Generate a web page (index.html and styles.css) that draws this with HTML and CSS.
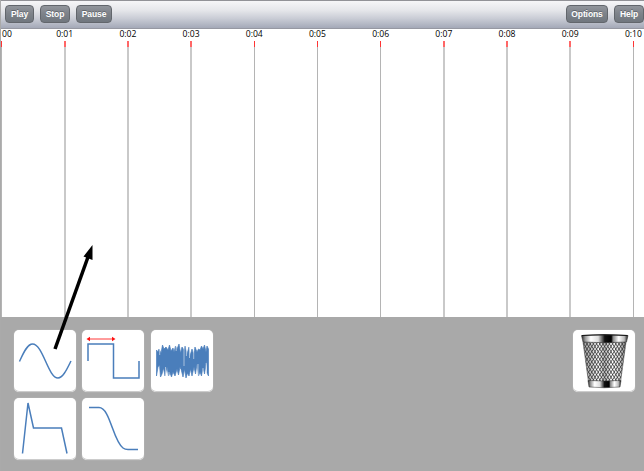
FILE: index.html
```html
<!DOCTYPE html>
<html lang="en">
<head>
<meta charset="utf-8">
<title>Sound timeline</title>
<link rel="stylesheet" href="styles.css">
</head>
<body>
<div class="app">
  <header class="toolbar">
    <div class="group"><button class="play">Play</button><button class="stop">Stop</button><button class="pause">Pause</button></div>
    <div class="group"><button class="options">Options</button><button class="help">Help</button></div>
  </header>
  <main class="timeline">
    <div class="tick first"><span>00</span></div>
    <div class="tick wide"><span>0:01</span></div>
    <div class="tick wide"><span>0:02</span></div>
    <div class="tick wide"><span>0:03</span></div>
    <div class="tick"><span>0:04</span></div>
    <div class="tick"><span>0:05</span></div>
    <div class="tick"><span>0:06</span></div>
    <div class="tick wide"><span>0:07</span></div>
    <div class="tick wide"><span>0:08</span></div>
    <div class="tick wide"><span>0:09</span></div>
    <div class="tick"><span>0:10</span></div>
  </main>
  <footer class="tray">
    <div class="tiles">
      <div class="tile"><svg viewBox="0 0 62 62"><path class="wave" d="M5.500 31.500C9 24 13 14 18.500 14C29 14 34 48 44 48C49 48 53 39 57 31"/></svg></div>
      <div class="tile"><svg viewBox="0 0 62 62"><path class="wave" d="M6 31V14H31.500V48H57V31"/><path class="range" d="M6 9H31"/><path class="range-end" d="M4.500 9L8 6.800V11.200ZM33.500 9L30 6.800V11.200Z"/></svg></div>
      <div class="tile"><svg viewBox="0 0 62 62"><path class="noise" d="M5.500 20L7 22L8 19L10 23L11.500 15L13 19L15 17L17 20L18.500 15L20 21L22 18L23 22L24.500 16L26 19L28 14L29.500 23L31 17L33 20L34 16L36 24L38 17L39 26L41 19L42.500 24L44 17L46 22L47.500 19L49 20L50.500 16L52 19L53.500 15L55 22L56 16L57.500 19V46L56 43V31L55 35L53.500 44L52 38L50.500 46L49 42L47.500 46L46 34L44.500 44L43 37L41 46L39.500 39L38 46L36.500 43L35 48L33.500 39L32 47L30.500 41L29 37L27.500 45L26 39L24 46L22 42L20.500 47L19 43L17.500 46L16 37L14 46L12.500 38L11 44L9.500 47L8.500 35L7 37L5.500 46Z"/><path class="gap" d="M8.700 17V25M14.500 37V48M18 42V48M25.200 13V21M29.500 39V48M33 15V36M35.400 16V26M38.500 16V28M42.700 18V29M47 34V47M55.200 33V47M52 38V47"/></svg></div>
      <div class="tile"><svg viewBox="0 0 62 62"><path class="wave" d="M8.500 55.500L14 5L19.500 30H47.500L53 55.500"/></svg></div>
      <div class="tile"><svg viewBox="0 0 62 62"><path class="wave" d="M7 9.500H17C28 9.500 31 43 41 50Q43 51.500 46 51.500H56"/></svg></div>
    </div>
    <div class="tile">
      <svg viewBox="0 0 62 62">
        <defs>
          <linearGradient id="rim"><stop offset="0" stop-color="#222"/><stop offset=".08" stop-color="#999"/><stop offset=".2" stop-color="#fff"/><stop offset=".36" stop-color="#ddd"/><stop offset=".5" stop-color="#111"/><stop offset=".64" stop-color="#000"/><stop offset=".68" stop-color="#888"/><stop offset=".8" stop-color="#fff"/><stop offset=".92" stop-color="#bbb"/><stop offset="1" stop-color="#111"/></linearGradient>
          <linearGradient id="body"><stop offset="0" stop-color="#999"/><stop offset=".2" stop-color="#ccc"/><stop offset=".36" stop-color="#fff"/><stop offset=".5" stop-color="#bbb"/><stop offset=".68" stop-color="#fff"/><stop offset=".85" stop-color="#ddd"/><stop offset="1" stop-color="#777"/></linearGradient>
          <clipPath id="basket"><path d="M10 12H53L47.500 52H15.500Z"/></clipPath>
        </defs>
        <path d="M10 12H53L47.500 52H15.500Z" fill="url(#body)"/>
        <g clip-path="url(#basket)" stroke="#333" stroke-width=".8" fill="none">
          <path d="M-16 12L9 52M-12.800 12L12.200 52M-9.600 12L15.400 52M-6.400 12L18.600 52M-3.200 12L21.800 52M0 12L25 52M3.200 12L28.200 52M6.400 12L31.400 52M9.600 12L34.600 52M12.800 12L37.800 52M16 12L41 52M19.200 12L44.200 52M22.400 12L47.400 52M25.600 12L50.600 52M28.800 12L53.800 52M32 12L57 52M35.200 12L60.200 52M38.400 12L63.400 52M41.600 12L66.600 52M44.800 12L69.800 52M48 12L73 52M51.200 12L76.200 52"/>
          <path d="M12 12L-13 52M15.200 12L-9.800 52M18.400 12L-6.600 52M21.600 12L-3.400 52M24.800 12L-.2 52M28 12L3 52M31.200 12L6.200 52M34.400 12L9.400 52M37.600 12L12.600 52M40.800 12L15.800 52M44 12L19 52M47.200 12L22.200 52M50.400 12L25.400 52M53.600 12L28.600 52M56.800 12L31.800 52M60 12L35 52M63.200 12L38.200 52M66.400 12L41.400 52M69.600 12L44.600 52M72.800 12L47.800 52"/>
        </g>
        <path d="M10 12L15.500 52M53 12L47.500 52" stroke="#555" stroke-width=".6"/>
        <path d="M15 50.500Q31 51.500 48 50.500L47 57Q31 58.500 16 57Z" fill="url(#rim)" stroke="#333" stroke-width=".5"/>
        <path d="M8.500 5.500Q31 4 55 5.500L53.500 12Q31 13.500 10 12Z" fill="url(#rim)" stroke="#333" stroke-width=".6"/>
        <path d="M9 5.500Q31 4 54.500 5.500" fill="none" stroke="#111" stroke-width="1.200"/>
      </svg>
    </div>
  </footer>
  <svg class="drag-arrow" viewBox="0 0 50 110"><path d="M12 106L45 14" stroke="#000" stroke-width="3.500"/><path d="M49.500 2L40.500 13.500L49.500 17Z"/></svg>
</div>
</body>
</html>
```
FILE: styles.css
```css
* { box-sizing: border-box; }
body { margin: 0; background: #fff; }
.app {
  position: relative;
  display: flex;
  flex-direction: column;
  width: 644px;
  height: 471px;
  overflow: hidden;
  border-left: 1px solid #aaa;
  font-family: "Liberation Sans", Arial, sans-serif;
}
.toolbar {
  display: flex;
  justify-content: space-between;
  height: 29px;
  padding: 4px 0 0 4px;
  border-top: 1px solid #929297;
  border-bottom: 1px solid #9698a2;
  background: linear-gradient(#f6f6f8, #e5e6ea 35%, #c9ccd5 65%, #a4a9b8);
}
.group { display: flex; gap: 6px; }
button {
  height: 18px;
  padding: 0;
  border: 1px solid #62666c;
  border-radius: 4px;
  background: linear-gradient(#92969c, #7d8289 50%, #70767e);
  color: #fff;
  font: bold 8.5px "Liberation Sans", Arial, sans-serif;
  letter-spacing: -.1px;
  text-align: center;
  text-shadow: 0 -1px 0 #62676e;
}
.play { width: 29px; }
.stop { width: 30px; }
.pause { width: 36px; }
.options { width: 42px; }
.help { width: 30px; }
.timeline {
  display: flex;
  height: 288px;
  margin-left: -31.6px;
  background: #fff;
}
.tick {
  display: flex;
  flex: 0 0 63.2px;
  flex-direction: column;
  align-items: center;
  font: 500 8.6px/10px "Open Sans", "Noto Sans", sans-serif;
  color: #000;
}
.tick::after {
  content: "";
  width: 1px;
  height: 276px;
  margin-left: 1px;
  border-top: 6px solid #f33;
  background: #b4b4b4;
}
.tick.wide::after {
  width: 2px;
  border-top-color: #f66;
  background: #c9c9c9;
}
.tick span { height: 12px; padding-left: 1px; }
.tick.first span { padding-left: 12px; }
.tick.first::after { margin-left: 0; }
.tray {
  display: flex;
  flex: 1;
  justify-content: space-between;
  align-items: flex-start;
  padding: 13px 9px 0 13px;
  background: #a9a9a9;
}
.tiles {
  display: grid;
  grid-template-columns: repeat(3, 62px);
  gap: 6px 6.4px;
}
.tile {
  width: 62px;
  height: 62px;
  border-radius: 5px;
  background: #fff;
  box-shadow: inset 0 -1px 0 #ccc, 0 0 1px #ddd;
}
.tile svg { display: block; width: 62px; height: 62px; }
.wave { fill: none; stroke: #4a7ebb; stroke-width: 1.5; }
.noise { fill: #4a7ebb; stroke: #4a7ebb; stroke-width: .7; }
.gap { stroke: #fff; stroke-width: .7; opacity: .75; }
.range { stroke: #f22; stroke-width: .9; }
.range-end { fill: #f11; }
.drag-arrow {
  position: absolute;
  left: 42px;
  top: 243px;
  width: 50px;
  height: 110px;
}
```
